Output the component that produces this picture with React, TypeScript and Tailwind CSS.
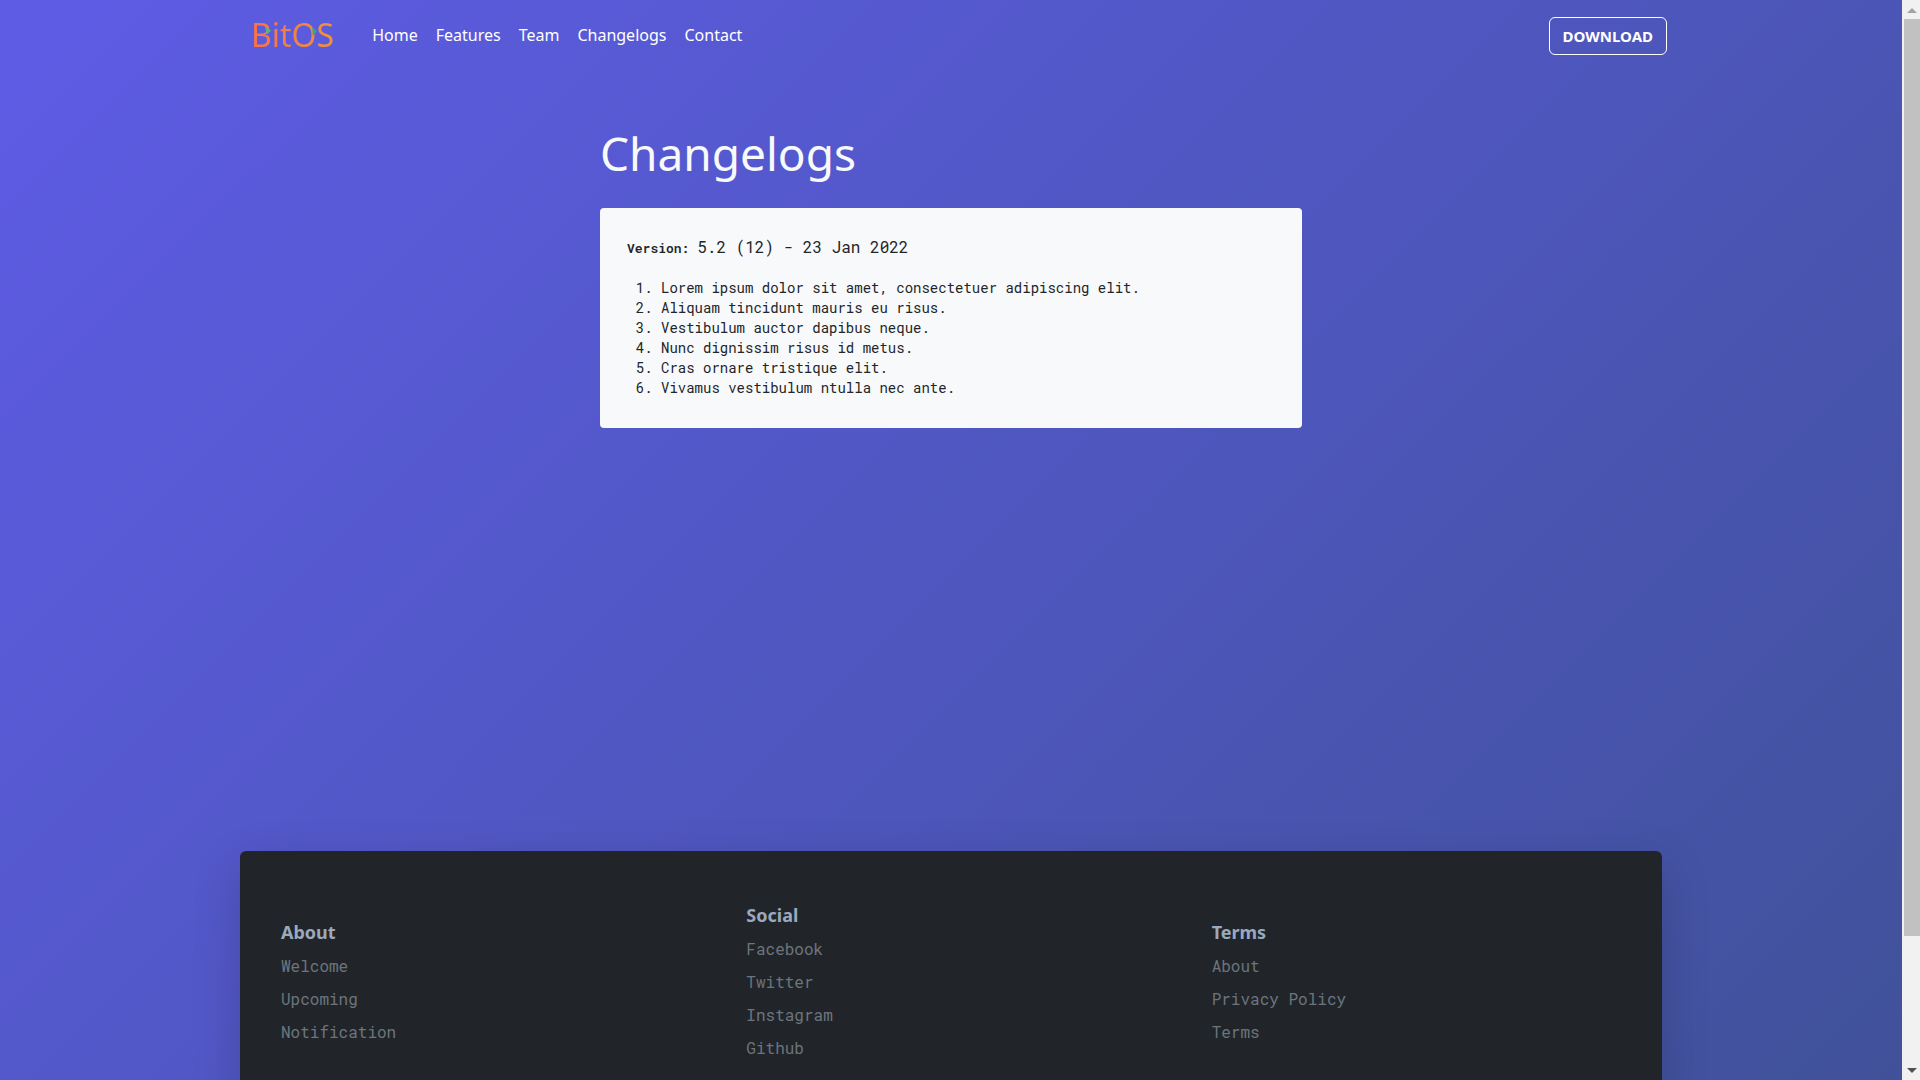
import { useState } from "react";

const navLinks = ["Home", "Features", "Team", "Changelogs", "Contact"];

const changes = [
    "Lorem ipsum dolor sit amet, consectetuer adipiscing elit.",
    "Aliquam tincidunt mauris eu risus.",
    "Vestibulum auctor dapibus neque.",
    "Nunc dignissim risus id metus.",
    "Cras ornare tristique elit.",
    "Vivamus vestibulum ntulla nec ante.",
];

const footerColumns = [
    { title: "About", links: ["Welcome", "Upcoming", "Notification"] },
    { title: "Social", links: ["Facebook", "Twitter", "Instagram", "Github"] },
    { title: "Terms", links: ["About", "Privacy Policy", "Terms"] },
];

const Logo = () => (
    <a href="#" className="relative block">
        <span className="block bg-linear-to-r from-[#ff7043] via-[#f08048] to-[#f59332] bg-clip-text text-[32px] leading-9 text-transparent">
            BitOS
        </span>
        {/* Green accents on the B and the O */}
        <svg
            className="pointer-events-none absolute top-0 left-0 h-9 w-20"
            viewBox="0 0 80 36"
            fill="none"
            aria-hidden="true"
        >
            <path d="M14 9l6 4.500-4 4z" fill="#4fb888" />
            <path d="M61 10l5 4-4 5z" fill="#3fa08a" />
        </svg>
    </a>
);

const Header = () => {
    const [active, setActive] = useState("Changelogs");

    return (
        <header className="-mr-[5px] flex items-start pt-[17px] pl-[11px]">
            <Logo />
            <nav className="ml-[38px] flex flex-1 gap-[18px] pt-1.5">
                {navLinks.map((label) => (
                    <a
                        key={label}
                        href={`#${label.toLowerCase()}`}
                        aria-current={active === label ? "page" : undefined}
                        onClick={() => setActive(label)}
                        className="text-base text-white hover:opacity-80"
                    >
                        {label}
                    </a>
                ))}
            </nav>
            <button
                type="button"
                className="h-[38px] rounded-md border border-white px-[13px] text-[15px] font-bold text-white hover:bg-white/10"
            >
                DOWNLOAD
            </button>
        </header>
    );
};

const Changelog = () => (
    <main className="mx-auto w-full max-w-[702px] flex-1 pt-[69px]">
        <h1 className="text-[46px] leading-[58px] text-[#f8f9fa]">Changelogs</h1>
        <article className="mt-[26px] rounded bg-[#f8f9fa] px-[27px] pt-[27px] pb-[30px] font-['Roboto_Mono','Liberation_Mono',monospace] text-[#212529]">
            <h2 className="leading-6">
                <strong className="text-[13px] font-semibold">Version: </strong>
                5.2 (12) - 23 Jan 2022
            </h2>
            <ol className="mt-[18px] list-decimal pl-[34px] text-[14px] leading-5">
                {changes.map((change) => (
                    <li key={change}>{change}</li>
                ))}
            </ol>
        </article>
    </main>
);

const Footer = () => (
    <footer className="grid grid-cols-3 items-center gap-x-14 rounded-md bg-[#212529] px-[41px] pt-12 pb-[115px] shadow-[0_16px_48px_rgba(0,0,0,0.175)]">
        {footerColumns.map((column) => (
            <section key={column.title}>
                <h3 className="text-lg leading-[33px] font-bold text-[#9aa9bd]">{column.title}</h3>
                <ul className="font-['Roboto_Mono','Liberation_Mono',monospace] leading-[33px] text-[#6c757d]">
                    {column.links.map((link) => (
                        <li key={link}>
                            <a href="#" className="hover:text-white">
                                {link}
                            </a>
                        </li>
                    ))}
                </ul>
            </section>
        ))}
    </footer>
);

const Scrollbar = () => (
    <div className="flex w-[18px] shrink-0 flex-col bg-[#f1f1f1] pl-0.5" aria-hidden="true">
        <svg className="h-[19px] w-full shrink-0" viewBox="0 0 16 19">
            <path d="M3 13h10L8 8z" fill="#a3a3a3" />
        </svg>
        <div className="flex-1">
            <div className="h-[88%] bg-[#c1c1c1]" />
        </div>
        <svg className="h-[19px] w-full shrink-0" viewBox="0 0 16 19">
            <path d="M3 7h10l-5 5z" fill="#505050" />
        </svg>
    </div>
);

const App = () => {
    return (
        <div className="flex h-screen font-['Noto_Sans',sans-serif]">
            <div className="flex-1 overflow-y-auto [scrollbar-width:none]">
                <div className="flex min-h-[1228px] flex-col bg-linear-[135deg] from-[#5e5ce6] to-[#3f5196] px-4 pb-[49px] lg:px-60">
                    <Header />
                    <Changelog />
                    <Footer />
                </div>
            </div>
            <Scrollbar />
        </div>
    );
};

export default App;
